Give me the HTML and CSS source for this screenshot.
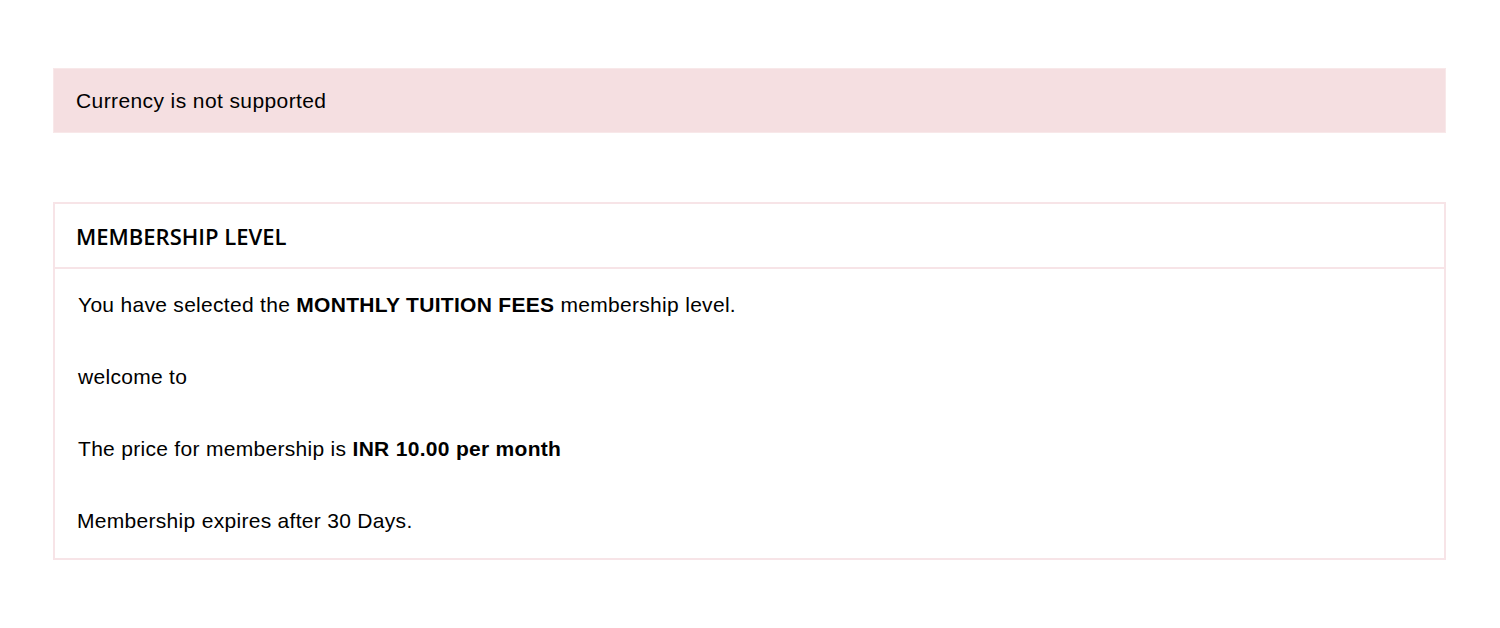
FILE: index.html
```html
<!DOCTYPE html>
<html>
<head>
<meta charset="utf-8">
<link rel="stylesheet" href="styles.css">
</head>
<body>
<div class="page">
  <div class="alert">Currency is not supported</div>
  <div class="card">
    <div class="card-header">MEMBERSHIP LEVEL</div>
    <div class="card-body">
      <p>You have selected the <strong>MONTHLY TUITION FEES</strong> membership level.</p>
      <p>welcome to</p>
      <p>The price for membership is <strong>INR 10.00 per month</strong></p>
      <p class="expires">Membership expires after 30 Days.</p>
    </div>
  </div>
</div>
</body>
</html>
```
FILE: styles.css
```css
html, body {
  margin: 0;
  padding: 0;
  background: #ffffff;
}
.page {
  padding: 68px 54px 0 53px;
  font-family: "Liberation Sans", Arial, sans-serif;
  color: #000;
}
.alert {
  background: #f5dfe1;
  border: 1px solid #f8e8e9;
  padding: 18px 22px;
  font-size: 21px;
  letter-spacing: 0.4px;
  line-height: 27px;
}
.card {
  margin-top: 69px;
  border: 2px solid #f7e4e7;
}
.card-header {
  font-family: "Open Sans", sans-serif;
  font-weight: 600;
  font-size: 22px;
  line-height: 24px;
  padding: 20px 21px 19px;
  border-bottom: 2px solid #f7e4e7;
}
.card-body {
  display: flex;
  flex-direction: column;
  gap: 48px;
  padding: 24px 22px 25px;
}
.card-body p {
  margin: 0;
  font-size: 21px;
  letter-spacing: 0.3px;
  line-height: 24px;
  padding-left: 1px;
}
.card-body p.expires {
  padding-left: 0;
}
.card-body strong {
  font-weight: bold;
  letter-spacing: 0.3px;
}
```
